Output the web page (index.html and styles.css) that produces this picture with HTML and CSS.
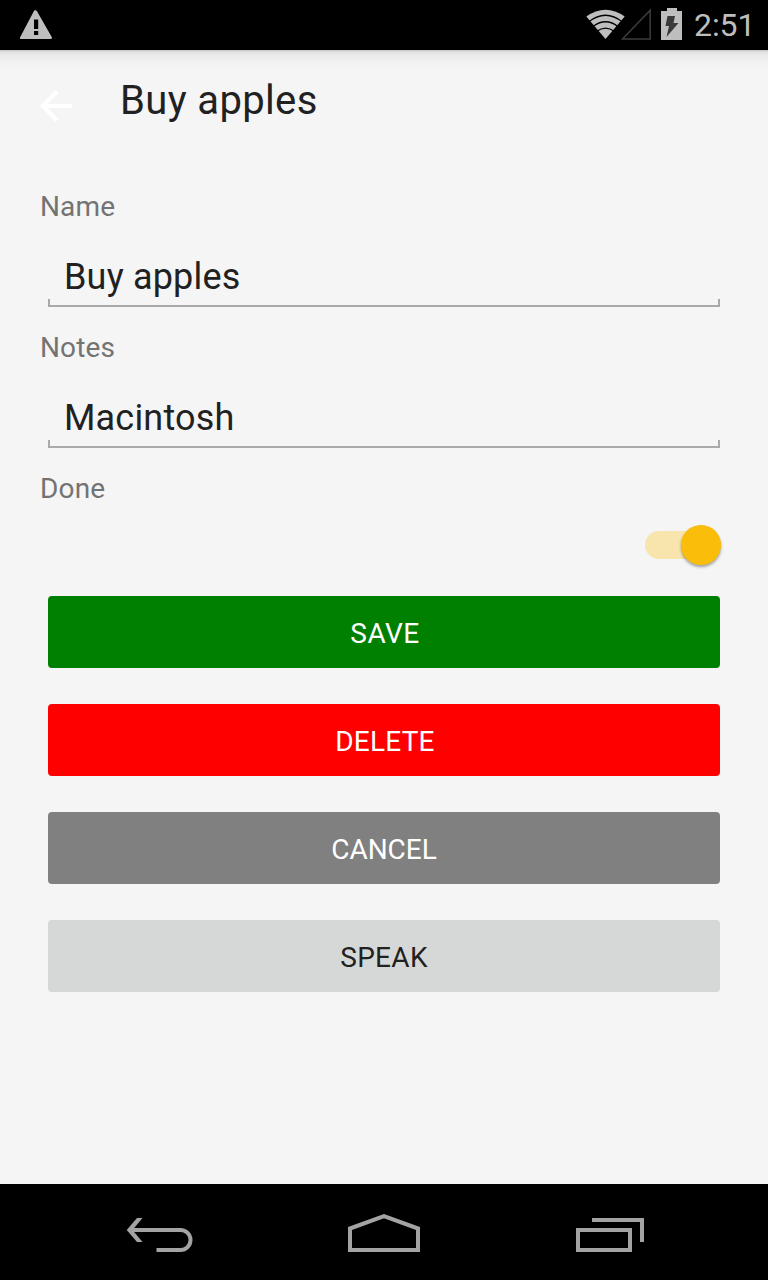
FILE: index.html
```
<!DOCTYPE html>
<html lang="en">
<head>
<meta charset="utf-8">
<title>Buy apples</title>
<link rel="stylesheet" href="styles.css">
</head>
<body>
<div class="screen">
  <header class="status-bar">
    <svg class="warning" width="34" height="32" viewBox="0 0 34 32"><path d="M16 1.300 Q17.200 .800 18 2.200 L33 28.500 Q33 30 31.500 30 H2 Q.500 30 1 28.500 L14.800 2.200 Q15.200 1.300 16 1.300Z" fill="#bebebe"/><path d="M15 10.500h4.200v9.500h-4.200zM15 22h4.200v4h-4.200z" fill="#000"/></svg>
    <div class="status-icons">
      <svg class="signals" width="66" height="32" viewBox="0 0 66 32">
        <path d="M19.500 31 .300 8.500 Q19.500-5 38.700 8.500Z" fill="#bebebe"/>
        <path d="M2.500 14Q19.500 .500 36.500 14M6.500 19Q19.500 8.500 32.500 19M10.500 23.600Q19.500 16.500 28.500 23.600" fill="none" stroke="#000" stroke-width="1.300"/>
        <path d="M36.500 31 64.200 2.200V31Z" fill="none" stroke="#3c3c3c" stroke-width="1.500"/>
      </svg>
      <svg class="battery" width="21" height="32" viewBox="0 0 21 32"><path d="M6 0h10v3h5v29H0V3h6z" fill="#bebebe"/><path d="M6.500 8H14l-1.500 7H17.500L5.500 29l2.500-11H4.500z" fill="#3a3a3a"/></svg>
      <span class="clock">2:51</span>
    </div>
  </header>
  <main class="page">
    <div class="toolbar">
      <svg class="back" width="32" height="32" viewBox="0 0 32 32"><path d="M32 16H3M17 1.500 2.700 16 17 30.500" fill="none" stroke="#fff" stroke-width="4"/></svg>
      <h1 class="title">Buy apples</h1>
    </div>
    <form class="form">
      <div class="field"><div class="label">Name</div><div class="input">Buy apples</div></div>
      <div class="field"><div class="label">Notes</div><div class="input">Macintosh</div></div>
      <div class="label">Done</div>
      <div class="switch-row"><div class="switch"><div class="thumb"></div></div></div>
      <div class="actions">
        <button type="button" class="button save">SAVE</button>
        <button type="button" class="button delete">DELETE</button>
        <button type="button" class="button cancel">CANCEL</button>
        <button type="button" class="button speak">SPEAK</button>
      </div>
    </form>
  </main>
  <nav class="nav-bar">
    <svg width="256" height="96" viewBox="0 0 256 96"><path d="M130 46H180.500A10 10 0 0 1 180.500 66H156.500" fill="none" stroke="#a3a3a3" stroke-width="4"/><path d="M137 34h5.500L132.500 46 142.500 58H137L126.700 46z" fill="#a3a3a3"/></svg>
    <svg width="256" height="96" viewBox="0 0 256 96"><path d="M94 66V44.500L128 32.200 162 44.500V66Z" fill="none" stroke="#a3a3a3" stroke-width="4"/></svg>
    <svg width="256" height="96" viewBox="0 0 256 96"><path d="M66 46h52v20H66zM80 36h50v22" fill="none" stroke="#a3a3a3" stroke-width="4"/></svg>
  </nav>
</div>
</body>
</html>
```
FILE: styles.css
```
body {
  margin: 0;
  background: #f5f5f5;
  color: #212121;
  font-family: Roboto, sans-serif;
}
svg { display: block; flex: none; }
.screen {
  display: flex;
  flex-direction: column;
  width: 768px;
  height: 1280px;
}
.status-bar {
  display: flex;
  justify-content: space-between;
  height: 50px;
  flex: none;
  background: #000;
}
.warning { margin: 9px 0 0 19px; }
.status-icons { display: flex; padding-right: 14px; }
.signals { margin-top: 8px; }
.battery { margin: 8px 12px 0 9px; }
.clock {
  width: 60px;
  white-space: nowrap;
  font-size: 32px;
  line-height: 51px;
  letter-spacing: -.1px;
  color: #bebebe;
}
.page {
  flex: 1;
  background: linear-gradient(#c4c4c4 0, #e2e2e2 2px, #eaeaea 5px, #f1f1f1 11px, #f5f5f5 20px);
}
.toolbar {
  display: flex;
  height: 138px;
  padding-left: 40px;
}
.back { margin-top: 40px; }
.title {
  margin: 27px 0 0 48px;
  font-size: 40px;
  font-weight: 400;
  line-height: 48px;
  letter-spacing: .36px;
}
.form { padding: 0 40px; }
.field { height: 141px; }
.label {
  font-size: 28px;
  line-height: 38px;
  letter-spacing: .15px;
  color: #737373;
}
.input {
  box-sizing: border-box;
  height: 81px;
  margin: 0 8px;
  padding: 29px 16px 0;
  font-size: 36px;
  line-height: 44px;
  letter-spacing: .18px;
  background:
    linear-gradient(#a9a9a9, #a9a9a9) left bottom / 2px 8px no-repeat,
    linear-gradient(#a9a9a9, #a9a9a9) right bottom / 2px 8px no-repeat,
    linear-gradient(#a9a9a9, #a9a9a9) left bottom / 100% 2px no-repeat;
}
.switch-row {
  box-sizing: border-box;
  display: flex;
  justify-content: flex-end;
  height: 88px;
  padding-top: 23px;
  margin-right: 7px;
}
.switch {
  display: flex;
  align-items: center;
  justify-content: flex-end;
  width: 76px;
  height: 28px;
  border-radius: 14px;
  background: #f8e5ae;
}
.thumb {
  flex: none;
  width: 40px;
  height: 40px;
  border-radius: 50%;
  background: #fabd09;
  box-shadow: 0 2px 3px rgba(0, 0, 0, .35);
}
.actions {
  display: flex;
  flex-direction: column;
  gap: 36px;
  padding: 0 8px;
}
.button {
  height: 72px;
  padding: 2px 0 0;
  border: 0;
  border-radius: 4px;
  color: #fff;
  font: 400 28px Roboto, sans-serif;
  letter-spacing: .2px;
}
.save { padding-left: 2px; background: #008000; letter-spacing: .5px; }
.delete { padding-left: 2px; background: #f00; }
.cancel { background: #808080; letter-spacing: 0; }
.speak { background: #d6d8d7; color: #212121; letter-spacing: .3px; }
.nav-bar {
  display: flex;
  flex: none;
  height: 96px;
  background: #000;
}
```
